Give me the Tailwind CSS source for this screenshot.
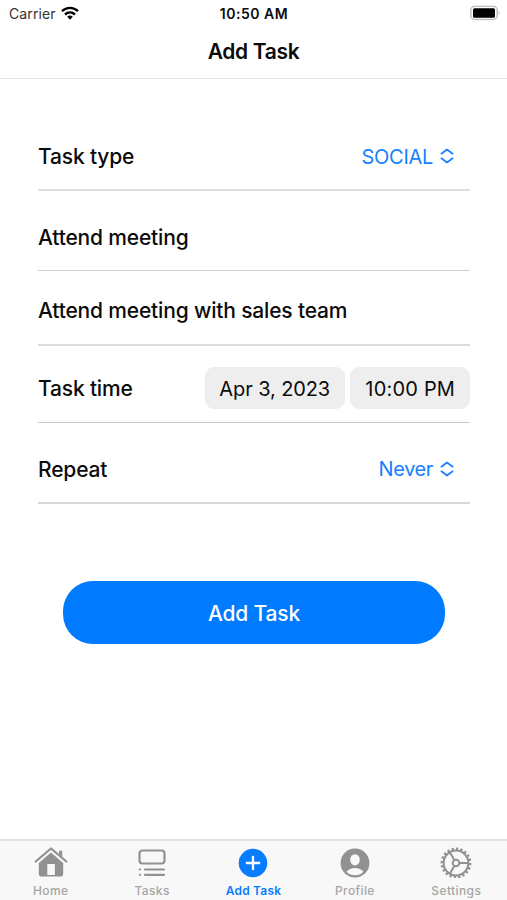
<!DOCTYPE html>
<html lang="en">
<head>
<meta charset="utf-8">
<title>Add Task</title>
<script src="https://cdn.jsdelivr.net/npm/@tailwindcss/browser@4"></script>
</head>
<body class="bg-white">
<div class="flex h-[900px] w-[507px] flex-col overflow-hidden bg-white font-['Inter',sans-serif] whitespace-nowrap text-[#0b0b0b]">
  <header class="flex h-[79px] flex-col border-b border-[#e6e6e6]">
    <div class="grid h-[27px] grid-cols-3 items-center pl-[9px] pr-[6px]">
      <div class="flex items-center gap-[5px] text-[14px] tracking-[0.1px] text-[#333]">
        <span>Carrier</span>
        <svg class="h-[14px] w-[18px] -translate-y-px" viewBox="0 0 18 14" fill="none" stroke="#000" stroke-width="2.4"><path d="M1 5.2C5.7.8 12.3.8 17 5.2M4 8.5c3-2.8 7-2.8 10 0"/><path d="M6.2 10.7c1.7-1.5 3.9-1.5 5.6 0L9 13.7z" fill="#000" stroke="none"/></svg>
      </div>
      <div class="-ml-[2px] text-center text-[14px] font-semibold tracking-[0.5px]">10:50 AM</div>
      <svg class="h-[15px] w-[31px] -translate-y-[0.5px] justify-self-end" viewBox="0 0 31 15"><rect x=".8" y=".8" width="26.4" height="13.2" rx="4" fill="#fff" stroke="#bdbdbd" stroke-width="1.5"/><rect x="3" y="2.8" width="22" height="9.4" rx="1.5"/><path d="M28.6 5.2q2 2.2 0 4.4z" fill="#b5b5b5"/></svg>
    </div>
    <h1 class="flex h-[49px] items-center justify-center text-[21px] font-semibold tracking-[-0.35px]">Add Task</h1>
  </header>
  <main class="flex-1 pr-[37px] pl-[38px] pt-[43px] text-[21px] font-medium tracking-[-0.17px]">
    <div class="flex h-[69px] items-center justify-between border-b-2 border-[#dedede] pt-px pr-[16px]">
      <span class="pt-[2px]">Task type</span>
      <span class="flex items-center gap-[7px] text-[20px] font-normal tracking-[-0.3px] text-[#1680ff]"><span class="pt-px">SOCIAL</span>
        <svg class="h-4 w-[14px]" viewBox="0 0 14 16" fill="none" stroke="currentColor" stroke-width="1.7" stroke-linecap="round" stroke-linejoin="round"><path d="m1.4 5.7 5.6-4.2 5.6 4.2M1.4 10.3 7 14.5l5.6-4.2"/></svg></span>
    </div>
    <div class="flex h-[80px] items-center border-b border-[#d0d0d0] pt-[15px]"><span>Attend meeting</span></div>
    <div class="flex h-[75px] items-center border-b-2 border-[#dcdcdc] pt-[6px]"><span>Attend meeting with sales team</span></div>
    <div class="flex h-[77px] items-center justify-between border-b border-[#c8c8c8] pt-[8px]">
      <span class="pt-[2px]">Task time</span>
      <span class="flex gap-[5px] text-[20px] font-normal tracking-[-0.1px]">
        <span class="flex h-[42px] w-[139.5px] items-center justify-center rounded-[9px] bg-[#eeeeef] pt-[2px]"><span>Apr 3, 2023</span></span>
        <span class="flex h-[42px] w-[120.5px] items-center justify-center rounded-[9px] bg-[#eeeeef] pt-[2px] pl-px tracking-[0.2px]"><span>10:00 PM</span></span>
      </span>
    </div>
    <div class="flex h-[81px] items-center justify-between border-b-2 border-[#d8d8d8] pt-[13px] pr-[16px]">
      <span class="pt-px">Repeat</span>
      <span class="flex items-center gap-[7px] text-[20px] font-normal tracking-[-0.4px] text-[#1680ff]"><span>Never</span>
        <svg class="h-4 w-[14px]" viewBox="0 0 14 16" fill="none" stroke="currentColor" stroke-width="1.7" stroke-linecap="round" stroke-linejoin="round"><path d="m1.4 5.7 5.6-4.2 5.6 4.2M1.4 10.3 7 14.5l5.6-4.2"/></svg></span>
    </div>
    <button class="mx-[25px] mt-[77px] flex h-[63px] w-[382px] items-center justify-center rounded-[30px] bg-[#007aff] pt-[2px] text-white"><span>Add Task</span></button>
  </main>
  <nav class="grid h-[61px] grid-cols-5 border-t-2 border-[#e3e3e3] bg-[#f8f8f8] pt-[5px] text-[12px] font-medium tracking-[0.4px] text-[#a5a5a5]">
    <div class="flex flex-col items-center gap-[6px]">
      <svg class="h-8 w-[34px]" viewBox="0 0 34 32" fill="#8f9290"><path d="M25 8V4.7h3.3v7z"/><path d="M1.7 15.5 17 2.5l15.3 13" fill="none" stroke="#8f9290" stroke-width="2.2" stroke-linecap="round" stroke-linejoin="round"/><path fill-rule="evenodd" d="M17 6.5 29.2 17v10.7q0 2.8-2.8 2.8H7.6q-2.8 0-2.8-2.8V17zM13.3 18v11h7.6V18z"/></svg>
      <span class="leading-[14px]">Home</span>
    </div>
    <div class="flex flex-col items-center gap-[6px]">
      <svg class="h-8 w-[30px]" viewBox="0 0 30 32" fill="none" stroke="#8f9290" stroke-width="2.2" stroke-linecap="round"><rect x="2.5" y="4.5" width="25" height="13" rx="3"/><path d="M2.8 23.5h.2M2.8 28.8H3M8 23.5h19M8 28.8h19"/></svg>
      <span class="leading-[14px]">Tasks</span>
    </div>
    <div class="flex flex-col items-center gap-[6px] font-semibold tracking-[0.2px] text-[#087cff]">
      <svg class="h-8 w-[30px]" viewBox="0 0 30 32"><circle cx="15" cy="17" r="14.3" fill="#087cff"/><path d="M15 10.8v12.4M8.8 17h12.4" stroke="#fff" stroke-width="2.3" stroke-linecap="round"/></svg>
      <span class="leading-[14px]">Add Task</span>
    </div>
    <div class="flex flex-col items-center gap-[6px]">
      <svg class="h-8 w-[30px]" viewBox="0 0 30 32"><circle cx="15" cy="17" r="14.4" fill="#8f9290"/><ellipse cx="15" cy="13.8" rx="4.8" ry="5.6" fill="#f8f8f8"/><path d="M6.5 25.8c3.7-5.1 13.3-5.1 17 0-4.2 4.7-12.8 4.7-17 0z" fill="#f8f8f8"/></svg>
      <span class="leading-[14px]">Profile</span>
    </div>
    <div class="flex flex-col items-center gap-[6px]">
      <svg class="h-8 w-[32px]" viewBox="0 0 32 32" fill="none" stroke="#8f9290" stroke-width="2"><circle cx="16" cy="17" r="12.4"/><circle cx="16" cy="17" r="14.1" stroke-width="2.6" pathLength="40" stroke-dasharray="1 1"/><circle cx="16" cy="17" r="3.3"/><path d="M19.3 17H28M14.3 14.1 9.8 6.3M14.3 19.9l-4.5 7.8"/></svg>
      <span class="leading-[14px]">Settings</span>
    </div>
  </nav>
</div>
</body>
</html>
